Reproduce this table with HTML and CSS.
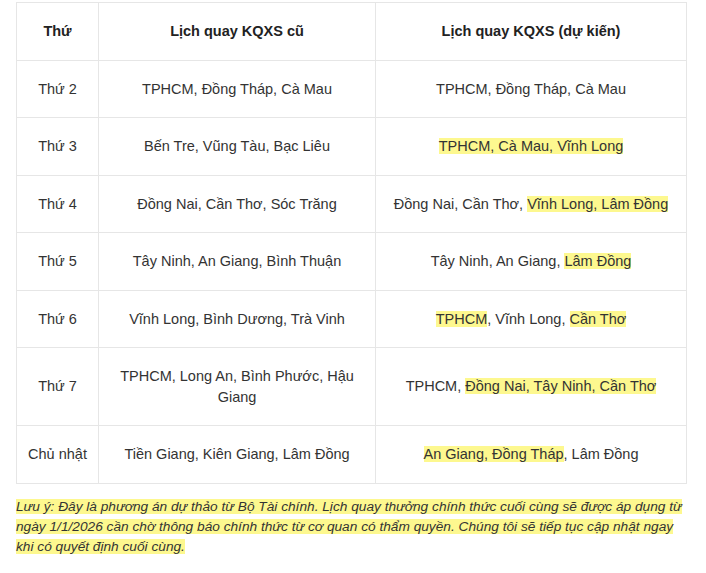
FILE: index.html
```html
<!DOCTYPE html>
<html lang="vi">
<head>
<meta charset="utf-8">
<link rel="stylesheet" href="styles.css">
</head>
<body>
<div class="wrap">
<table class="sched">
  <colgroup><col class="c1"><col class="c2"><col class="c3"></colgroup>
  <thead>
    <tr><th>Thứ</th><th>Lịch quay KQXS cũ</th><th>Lịch quay KQXS (dự kiến)</th></tr>
  </thead>
  <tbody>
    <tr><td>Thứ 2</td><td>TPHCM, Đồng Tháp, Cà Mau</td><td>TPHCM, Đồng Tháp, Cà Mau</td></tr>
    <tr><td>Thứ 3</td><td>Bến Tre, Vũng Tàu, Bạc Liêu</td><td><span class="hl">TPHCM, Cà Mau, Vĩnh Long</span></td></tr>
    <tr><td>Thứ 4</td><td>Đồng Nai, Cần Thơ, Sóc Trăng</td><td>Đồng Nai, Cần Thơ, <span class="hl">Vĩnh Long, Lâm Đồng</span></td></tr>
    <tr><td>Thứ 5</td><td>Tây Ninh, An Giang, Bình Thuận</td><td>Tây Ninh, An Giang, <span class="hl">Lâm Đồng</span></td></tr>
    <tr><td>Thứ 6</td><td>Vĩnh Long, Bình Dương, Trà Vinh</td><td><span class="hl">TPHCM</span>, Vĩnh Long, <span class="hl">Cần Thơ</span></td></tr>
    <tr><td>Thứ 7</td><td>TPHCM, Long An, Bình Phước, Hậu Giang</td><td>TPHCM, <span class="hl">Đồng Nai, Tây Ninh, Cần Thơ</span></td></tr>
    <tr><td>Chủ nhật</td><td>Tiền Giang, Kiên Giang, Lâm Đồng</td><td><span class="hl">An Giang, Đồng Tháp</span>, Lâm Đồng</td></tr>
  </tbody>
</table>
<p class="note"><span class="hl">Lưu ý: Đây là phương án dự thảo từ Bộ Tài chính. Lịch quay thưởng chính thức cuối cùng sẽ được áp dụng từ ngày 1/1/2026 cần chờ thông báo chính thức từ cơ quan có thẩm quyền. Chúng tôi sẽ tiếp tục cập nhật ngay khi có quyết định cuối cùng.</span></p>
</div>
</body>
</html>
```
FILE: styles.css
```css
html, body {
  margin: 0;
  padding: 0;
  background: #fff;
}
body {
  font-family: "Liberation Sans", Arial, sans-serif;
  color: #333;
  font-size: 14.5px;
}
.wrap {
  padding: 2px 20px 0 16px;
}
.sched {
  border-collapse: collapse;
  table-layout: fixed;
  width: 671px;
}
.c1 { width: 82px; }
.c2 { width: 277px; }
.c3 { width: 311px; }
.sched th, .sched td {
  border: 1px solid #e6e6e6;
  padding: 18px 10px;
  line-height: 20.5px;
  text-align: center;
  vertical-align: middle;
  font-size: 14.5px;
}
.sched th {
  font-weight: bold;
  color: #222;
}
.hl {
  background: #fdf88f;
}
.note {
  margin: 13px 0 0 0;
  width: 671px;
  font-style: italic;
  line-height: 20px;
  font-size: 13.7px;
  color: #333;
}
```
